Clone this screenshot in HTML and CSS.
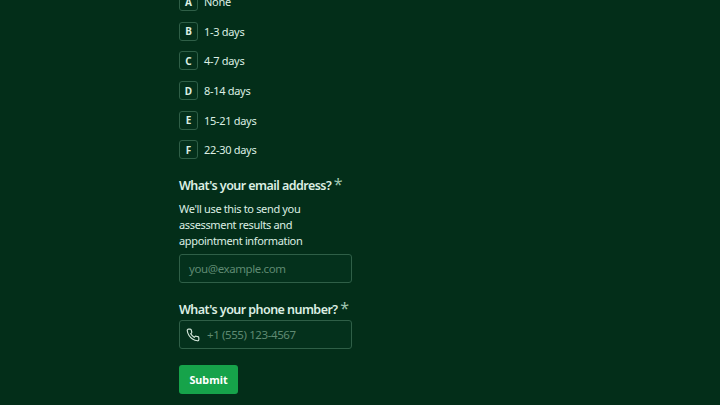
FILE: index.html
```html
<!DOCTYPE html>
<html>
<head>
	<title>Assessment</title>
	<link rel="stylesheet" href="styles.css">
</head>
<body>
	<form class="form">
		<div class="options">
			<div class="option"><span class="key">A</span><span>None</span></div>
			<div class="option"><span class="key">B</span><span>1-3 days</span></div>
			<div class="option"><span class="key">C</span><span>4-7 days</span></div>
			<div class="option"><span class="key">D</span><span>8-14 days</span></div>
			<div class="option"><span class="key">E</span><span>15-21 days</span></div>
			<div class="option"><span class="key">F</span><span>22-30 days</span></div>
		</div>

		<div class="label email-label">What's your email address? <span class="req">*</span></div>
		<p class="hint">We'll use this to send you assessment results and appointment information</p>
		<div class="field"><span class="placeholder">you@example.com</span></div>

		<div class="label phone-label">What's your phone number? <span class="req">*</span></div>
		<div class="field phone">
			<svg class="phone-icon" width="14" height="14" viewBox="0 0 24 24" fill="none" stroke="currentColor" stroke-width="2" stroke-linecap="round" stroke-linejoin="round"><path d="M22 16.92v3a2 2 0 0 1-2.18 2 19.79 19.79 0 0 1-8.63-3.07 19.5 19.5 0 0 1-6-6 19.79 19.79 0 0 1-3.07-8.67A2 2 0 0 1 4.11 2h3a2 2 0 0 1 2 1.72c.13.96.36 1.9.7 2.81a2 2 0 0 1-.45 2.11L8.09 9.91a16 16 0 0 0 6 6l1.27-1.27a2 2 0 0 1 2.11-.45c.91.34 1.85.57 2.81.7A2 2 0 0 1 22 16.92z"/></svg>
			<span class="placeholder">+1 (555) 123-4567</span>
		</div>

		<div class="submit">Submit</div>
	</form>
</body>
</html>
```

FILE: styles.css
```css
html, body
{
	margin: 0;
	height: 405px;
	overflow: hidden;
	background: #032e19;
}

body
{
	font-family: "Noto Sans", sans-serif;
	color: #dcefe3;
}

.form
{
	width: 173px;
	margin: -8px 0 0 179px;
}

.options
{
	display: flex;
	flex-direction: column;
	gap: 10.7px;
}

.option
{
	display: flex;
	align-items: center;
	gap: 6px;
	height: 19px;
	font-size: 11px;
	letter-spacing: -0.3px;
}

.key
{
	box-sizing: border-box;
	width: 19px;
	height: 19px;
	display: flex;
	align-items: center;
	justify-content: center;
	font-size: 10px;
	font-weight: 700;
	letter-spacing: 0;
	border: 1px solid #2f5f47;
	border-radius: 3px;
	background: #04301b;
}

.label
{
	font-size: 12.5px;
	font-weight: 600;
	line-height: 18px;
	letter-spacing: -0.55px;
	white-space: nowrap;
}

.email-label
{
	margin-top: 18px;
}

.phone-label
{
	margin-top: 18px;
}

.req
{
	color: #9cc4ae;
	font-size: 16px;
	line-height: 14px;
	font-weight: 400;
}

.hint
{
	margin: 6px 0 5px;
	font-size: 11px;
	line-height: 16px;
	letter-spacing: -0.35px;
}

.field
{
	box-sizing: border-box;
	height: 29px;
	display: flex;
	align-items: center;
	padding: 0 9px;
	border: 1px solid #2f5f47;
	border-radius: 3px;
	background: #04311c;
}

.phone
{
	margin-top: 1px;
	padding-left: 6px;
	gap: 7px;
}

.phone-icon
{
	color: #d5e8dc;
}

.placeholder
{
	font-size: 11.5px;
	letter-spacing: -0.4px;
	color: #5f8a72;
}

.submit
{
	width: 59px;
	height: 29px;
	margin-top: 16px;
	display: flex;
	align-items: center;
	justify-content: center;
	background: #16a34a;
	border-radius: 3px;
	font-size: 10.8px;
	font-weight: 700;
	color: #fff;
}
```
